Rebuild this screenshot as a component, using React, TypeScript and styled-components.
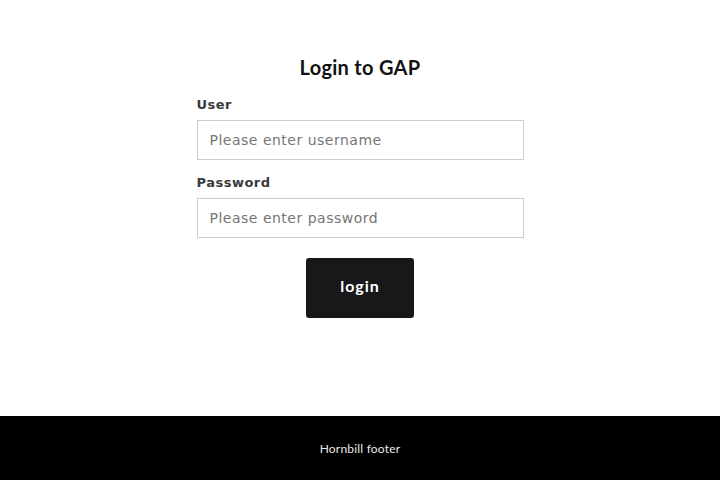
import React from "react";
import styled, { createGlobalStyle } from "styled-components";

const GlobalStyle = createGlobalStyle`
  html, body {
    margin: 0;
    padding: 0;
    background: #ffffff;
  }
  * {
    box-sizing: border-box;
  }
`;

const Page = styled.div`
  display: flex;
  flex-direction: column;
  min-height: 100vh;
`;

const Main = styled.main`
  flex: 1;
  display: flex;
  justify-content: center;
  padding-top: 56px;
`;

const Form = styled.form`
  width: 327px;
  display: flex;
  flex-direction: column;
`;

const Title = styled.h1`
  margin: -1px 0 18px;
  text-align: center;
  font-family: Lato, "Noto Sans", sans-serif;
  font-weight: 700;
  font-size: 20px;
  line-height: 24px;
  letter-spacing: 0.3px;
  color: #111111;
`;

const Label = styled.label`
  font-family: "DejaVu Sans", sans-serif;
  font-weight: 700;
  font-size: 13px;
  line-height: 16px;
  letter-spacing: 0.5px;
  color: #3a3a3a;
  margin-bottom: 7px;
`;

const Input = styled.input`
  height: 40px;
  width: 100%;
  border: 1px solid #cccccc;
  border-radius: 0;
  padding: 0 12px;
  font-family: "DejaVu Sans", sans-serif;
  font-size: 14px;
  letter-spacing: 0.5px;
  color: #222222;
  margin-bottom: 15px;
  outline: none;

  &::placeholder {
    color: #767676;
  }
`;

const Button = styled.button`
  align-self: center;
  width: 108px;
  height: 60px;
  margin-top: 5px;
  padding: 0 0 5px;
  border: none;
  border-radius: 3px;
  background: #18181b;
  color: #ffffff;
  font-family: Lato, "Noto Sans", sans-serif;
  font-weight: 700;
  font-size: 16px;
  letter-spacing: 1px;
  cursor: pointer;
`;

const Footer = styled.footer`
  height: 64px;
  background: #000000;
  display: flex;
  align-items: center;
  justify-content: center;
  font-family: Lato, "Noto Sans", sans-serif;
  font-size: 12px;
  letter-spacing: 0.2px;
  color: #e8e8e8;
`;

export default function App() {
  return (
    <>
      <GlobalStyle />
      <Page>
        <Main>
          <Form onSubmit={(e) => e.preventDefault()}>
            <Title>Login to GAP</Title>
            <Label htmlFor="user">User</Label>
            <Input id="user" type="text" placeholder="Please enter username" />
            <Label htmlFor="password">Password</Label>
            <Input
              id="password"
              type="password"
              placeholder="Please enter password"
            />
            <Button type="submit">login</Button>
          </Form>
        </Main>
        <Footer>Hornbill footer</Footer>
      </Page>
    </>
  );
}
